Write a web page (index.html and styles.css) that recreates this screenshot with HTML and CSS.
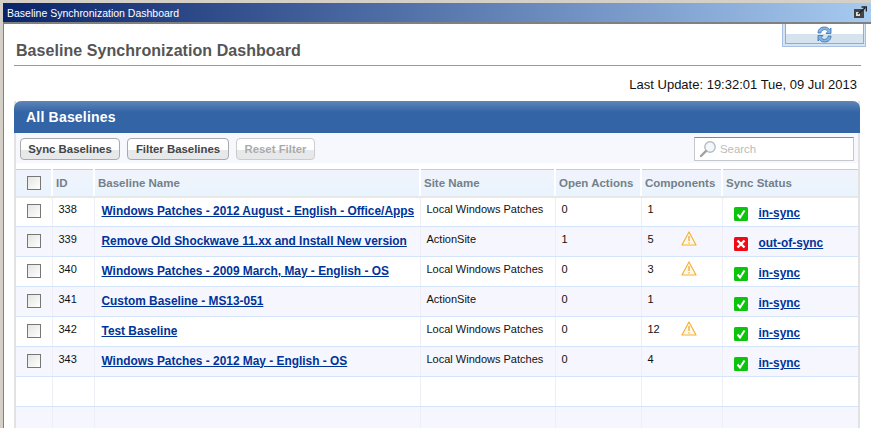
FILE: index.html
```html
<!DOCTYPE html>
<html lang="en">

<head>
    <meta charset="UTF-8">
    <title>Baseline Synchronization Dashboard</title>
    <link rel="stylesheet" href="styles.css">
</head>

<body>
    <div class="window">
        <div class="title-bar">
            <span class="title-text">Baseline Synchronization Dashboard</span>
            <svg class="popout" width="13" height="13" viewBox="0 0 13 13">
                <rect x="0" y="3" width="10" height="9" fill="#444"/>
                <rect x="2" y="6" width="4" height="4" fill="#ddd"/>
                <path d="M4 8 L11 2 M7.5 1 H12.5 V5.5" stroke="#222" stroke-width="1.6" fill="none"/>
            </svg>
        </div>

        <div class="content">
            <div class="refresh-tab">
                <div class="refresh-inner">
                    <svg width="15" height="17" viewBox="0 0 15 17">
                        <path d="M1 7 C1 3 4 1 7.5 1 C10 1 11.5 2 12.5 3.5 L14 2 V7.5 H9 L10.8 5.4 C10 4.2 9 3.6 7.5 3.6 C5.5 3.6 4.2 5 3.8 7 Z" fill="#8ab4e0" stroke="#2f6db5" stroke-width="0.8"/>
                        <path d="M14 10 C14 14 11 16 7.5 16 C5 16 3.5 15 2.5 13.5 L1 15 V9.5 H6 L4.2 11.6 C5 12.8 6 13.4 7.5 13.4 C9.5 13.4 10.8 12 11.2 10 Z" fill="#8ab4e0" stroke="#2f6db5" stroke-width="0.8"/>
                    </svg>
                </div>
            </div>

            <h1 class="page-title">Baseline Synchronization Dashboard</h1>
            <div class="last-update">Last Update: 19:32:01 Tue, 09 Jul 2013</div>

            <div class="panel">
                <div class="panel-header">All Baselines</div>
                <div class="toolbar">
                    <button class="btn">Sync Baselines</button>
                    <button class="btn btn-filter">Filter Baselines</button>
                    <button class="btn btn-reset">Reset Filter</button>
                    <div class="search">
                        <svg width="18" height="18" viewBox="0 0 18 18">
                            <circle cx="11" cy="7" r="5.2" fill="#f4f7fa" stroke="#b4bcc4" stroke-width="1.4"/>
                            <path d="M7 11 L2 16" stroke="#a0a0a0" stroke-width="2.4" stroke-linecap="round"/>
                        </svg>
                        <span>Search</span>
                    </div>
                </div>

                <table class="grid">
                    <colgroup>
                        <col class="col-check">
                        <col class="col-id">
                        <col class="col-name">
                        <col class="col-site">
                        <col class="col-actions">
                        <col class="col-components">
                        <col>
                    </colgroup>
                    <thead>
                        <tr>
                            <th class="check-cell"><span class="check"></span></th>
                            <th>ID</th>
                            <th>Baseline Name</th>
                            <th>Site Name</th>
                            <th>Open Actions</th>
                            <th>Components</th>
                            <th>Sync Status</th>
                        </tr>
                    </thead>
                    <tbody id="rows"></tbody>
                </table>
            </div>
        </div>
    </div>

    <script>
        const baselines = [
            [338, 'Windows Patches - 2012 August - English - Office/Apps', 'Local Windows Patches', 0, 1, false, true],
            [339, 'Remove Old Shockwave 11.xx and Install New version', 'ActionSite', 1, 5, true, false],
            [340, 'Windows Patches - 2009 March, May - English - OS', 'Local Windows Patches', 0, 3, true, true],
            [341, 'Custom Baseline - MS13-051', 'ActionSite', 0, 1, false, true],
            [342, 'Test Baseline', 'Local Windows Patches', 0, 12, true, true],
            [343, 'Windows Patches - 2012 May - English - OS', 'Local Windows Patches', 0, 4, false, true]
        ];

        const warnIcon = '<svg class="warn" width="16" height="15" viewBox="0 0 16 15"><path d="M8 1 L15 14 H1 Z" fill="#fffbe8" stroke="#f5b03c" stroke-width="1.2" stroke-linejoin="round"/><path d="M8 5 V10 M8 11.2 V12.6" stroke="#e8a030" stroke-width="1.2"/></svg>';
        const okIcon = '<svg class="status-icon" width="14" height="14" viewBox="0 0 14 14"><rect width="14" height="14" rx="1.5" fill="#0cc40c"/><path d="M3.5 7.5 L6 10.5 L10.5 3.5" stroke="#fff" stroke-width="2" fill="none"/></svg>';
        const badIcon = '<svg class="status-icon" width="14" height="14" viewBox="0 0 14 14"><rect width="14" height="14" rx="1.5" fill="#f00a14"/><path d="M3.5 3.5 L10.5 10.5 M10.5 3.5 L3.5 10.5" stroke="#fff" stroke-width="2.4"/></svg>';

        let html = '';
        baselines.forEach(b => {
            html += '<tr>'
                + '<td class="check-cell"><span class="check"></span></td>'
                + '<td>' + b[0] + '</td>'
                + '<td class="name-cell"><a href="#">' + b[1] + '</a></td>'
                + '<td>' + b[2] + '</td>'
                + '<td>' + b[3] + '</td>'
                + '<td><div class="components"><span>' + b[4] + '</span>' + (b[5] ? warnIcon : '') + '</div></td>'
                + '<td class="status-cell">' + (b[6] ? okIcon : badIcon) + '<a href="#">' + (b[6] ? 'in-sync' : 'out-of-sync') + '</a></td>'
                + '</tr>';
        });
        // empty rows at the bottom of the grid
        for (let i = 0; i < 2; i++) {
            html += '<tr>' + '<td></td>'.repeat(7) + '</tr>';
        }
        document.getElementById('rows').innerHTML = html;
    </script>
</body>

</html>
```

FILE: styles.css
```css
* {
    margin: 0;
    padding: 0;
    box-sizing: border-box;
}

html,
body {
    height: 428px;
    overflow: hidden;
}

body {
    background: #d4d0c8;
    font-family: "Liberation Sans", Arial, sans-serif;
    padding: 3px 0 0 3px;
}

.window {
    height: 425px;
}

.title-bar {
    height: 19px;
    background: linear-gradient(to right, #0a246a, #a6caf0);
    color: #fff;
    font-size: 10.5px;
    display: flex;
    align-items: center;
    justify-content: space-between;
    padding: 0 4px 0 4px;
}

.popout {
    margin-bottom: 1px;
}

.content {
    position: relative;
    height: 406px;
    background: #fff;
    border-top: 2px solid #808080;
    border-left: 1px solid #808080;
    padding: 0 10px;
}

.refresh-tab {
    position: absolute;
    top: 0;
    left: 778px;
    width: 84px;
    height: 23px;
    background: #d6e4f2;
    border: 1px solid #a9c0e6;
    border-top: 0;
    padding: 0 1px 2px 2px;
}

.refresh-inner {
    height: 20px;
    background: linear-gradient(to bottom, #fff 55%, #d6e2ee 55%);
    border: 1px solid #a8a8a8;
    border-top: 0;
    display: flex;
    justify-content: center;
    align-items: flex-start;
    padding-top: 2px;
}

.page-title {
    font-size: 16px;
    letter-spacing: 0.06px;
    font-weight: bold;
    color: #555;
    height: 42px;
    line-height: 19px;
    padding: 17px 0 0 2px;
    border-bottom: 1px solid #8aba20;
}

.last-update {
    font-size: 13px;
    color: #111;
    text-align: right;
    height: 35px;
    padding: 11px 4px 0 0;
}

.panel {
    width: 846px;
    background: #fff;
    border-left: 2px solid #e2e2e2;
    border-right: 2px solid #e2e2e2;
}

.panel-header {
    margin: 0 -2px;
    height: 32px;
    background: linear-gradient(to bottom, #5f86b8, #3264a6 35%);
    border-radius: 7px 7px 0 0;
    color: #fff;
    font-size: 14px;
    letter-spacing: 0.2px;
    font-weight: bold;
    line-height: 33px;
    padding-left: 12px;
}

.toolbar {
    height: 30px;
    background: #f6f8fe;
    display: flex;
    align-items: flex-start;
    gap: 7px;
    padding: 5px 4px 0 4px;
}

.btn {
    height: 22px;
    width: 100px;
    font-family: inherit;
    font-size: 11.4px;
    font-weight: bold;
    color: #444;
    border: 1px solid #aaa;
    border-radius: 4px;
    background: linear-gradient(to bottom, #fff 55%, #e6e8ea 55%);
}

.btn-filter {
    width: 102px;
}

.btn-reset {
    width: 79px;
    color: #aaa;
    border-color: #ccc;
}

.search {
    margin-left: auto;
    margin-top: -1px;
    width: 160px;
    height: 24px;
    background: #fff;
    border: 1px solid #c4c8cc;
    border-top-color: #888;
    display: flex;
    align-items: center;
    gap: 3px;
    padding-left: 4px;
    font-size: 11.4px;
    color: #bbb;
}

.grid {
    width: 842px;
    margin-top: 6px;
    table-layout: fixed;
    border-collapse: collapse;
    font-size: 11px;
    color: #111;
}

.col-check {
    width: 36px;
}

.col-id {
    width: 42px;
}

.col-name {
    width: 326px;
}

.col-site {
    width: 135px;
}

.col-actions {
    width: 86px;
}

.col-components {
    width: 81px;
}

.grid th {
    height: 27px;
    background: linear-gradient(to bottom, #f1f3fa, #e9f4fe);
    border-top: 1px solid #c6cde0;
    border-left: 2px solid #fff;
    border-bottom: 2px solid #e8e8e8;
    color: #758088;
    font-size: 11.5px;
    font-weight: bold;
    text-align: left;
    padding: 0 0 0 3px;
}

.grid td {
    height: 30px;
    border-left: 1px solid #eeeef4;
    border-bottom: 1px solid #d4e4fb;
    padding: 0 0 5px 6px;
    vertical-align: middle;
}

.grid tbody tr:nth-child(even) td {
    background: #f5f6fe;
}

.grid th:first-child,
.grid td:first-child {
    border-left: 0;
}

.grid .check-cell {
    text-align: center;
    padding: 0;
}

.grid td.check-cell {
    padding-bottom: 2px;
}

.check {
    display: inline-block;
    width: 14px;
    height: 14px;
    border: 1px solid #777;
    background: linear-gradient(135deg, #e4e4e0, #fff);
    vertical-align: middle;
}

.grid .name-cell {
    padding-left: 7px;
    padding-bottom: 2px;
}

.grid a {
    color: #003399;
    font-size: 11.9px;
    font-weight: bold;
}

.components {
    display: flex;
    align-items: center;
}

.components span {
    width: 33px;
}

.warn {
    margin-top: -1px;
}

.grid .status-cell {
    padding: 4px 0 0 11px;
    white-space: nowrap;
}

.status-icon {
    vertical-align: middle;
    margin-right: 11px;
}
```
